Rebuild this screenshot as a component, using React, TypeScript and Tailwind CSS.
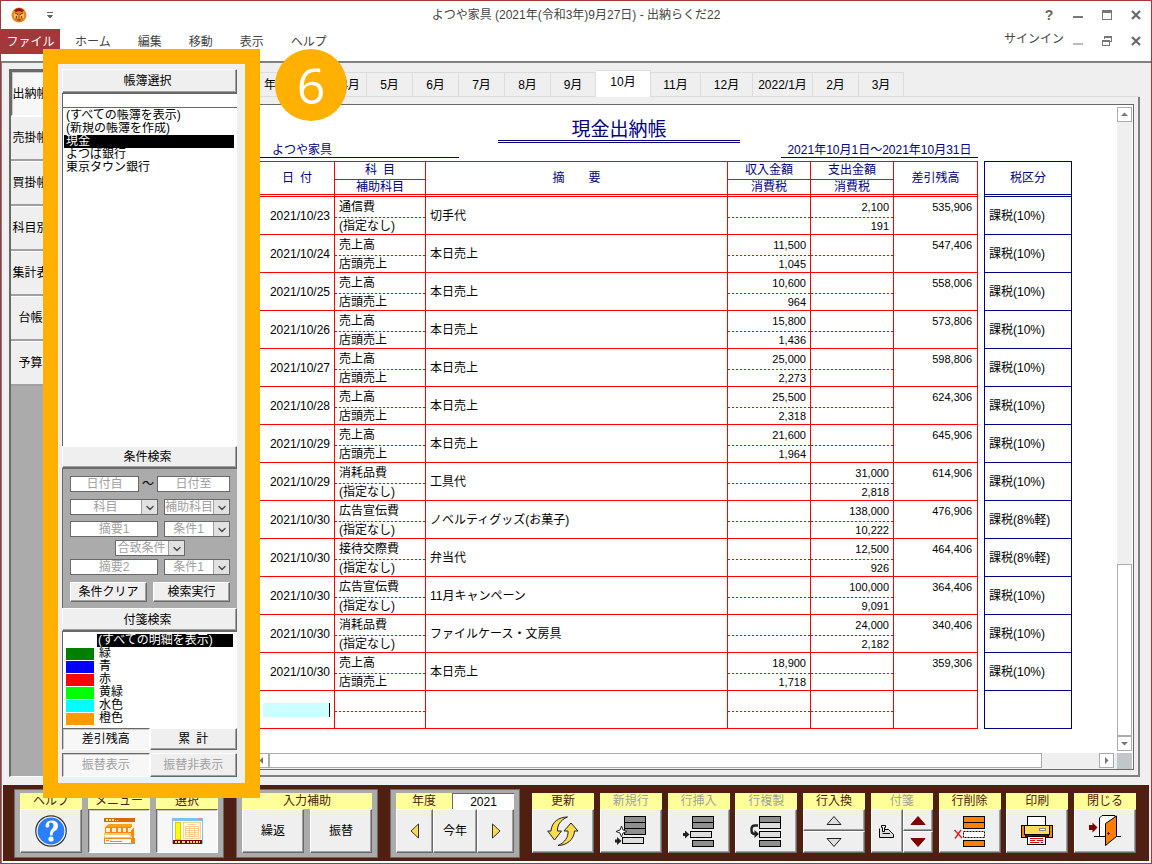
import React from 'react';
import { ChevronDown } from 'lucide-react';

const bevel =
  'bg-[#efefef] border border-t-white border-l-white border-r-[#696969] border-b-[#696969] shadow-[inset_-1px_-1px_0_#a0a0a0]';
const pressed =
  'bg-[#f7f7f7] border border-t-[#696969] border-l-[#696969] border-r-white border-b-white shadow-[inset_1px_1px_0_#c8c8c8]';

const ledgers = ['(すべての帳簿を表示)', '(新規の帳簿を作成)', '現金', 'よつば銀行', '東京タウン銀行'];

const sideTabs = ['出納帳', '売掛帳', '買掛帳', '科目別', '集計表', '台帳', '予算'];

const months = [
  { label: '5月', width: 'w-[46px]' },
  { label: '6月', width: 'w-[46px]' },
  { label: '7月', width: 'w-[46px]' },
  { label: '8月', width: 'w-[46px]' },
  { label: '9月', width: 'w-[45px]' },
  { label: '10月', width: 'w-[55px]' },
  { label: '11月', width: 'w-[50px]' },
  { label: '12月', width: 'w-[52px]' },
  { label: '2022/1月', width: 'w-[60px]' },
  { label: '2月', width: 'w-[46px]' },
  { label: '3月', width: 'w-[45px]' },
];

const flags = [
  { label: '緑', color: 'bg-[#008000]' },
  { label: '青', color: 'bg-[#0000ff]' },
  { label: '赤', color: 'bg-[#ff0000]' },
  { label: '黄緑', color: 'bg-[#00ff00]' },
  { label: '水色', color: 'bg-[#00ffff]' },
  { label: '橙色', color: 'bg-[#ff9900]' },
];

type Entry = {
  date: string;
  account: string;
  sub: string;
  note: string;
  income?: [string, string];
  expense?: [string, string];
  balance: string;
  tax: string;
};

const entries: Entry[] = [
  { date: '2021/10/23', account: '通信費', sub: '(指定なし)', note: '切手代', expense: ['2,100', '191'], balance: '535,906', tax: '課税(10%)' },
  { date: '2021/10/24', account: '売上高', sub: '店頭売上', note: '本日売上', income: ['11,500', '1,045'], balance: '547,406', tax: '課税(10%)' },
  { date: '2021/10/25', account: '売上高', sub: '店頭売上', note: '本日売上', income: ['10,600', '964'], balance: '558,006', tax: '課税(10%)' },
  { date: '2021/10/26', account: '売上高', sub: '店頭売上', note: '本日売上', income: ['15,800', '1,436'], balance: '573,806', tax: '課税(10%)' },
  { date: '2021/10/27', account: '売上高', sub: '店頭売上', note: '本日売上', income: ['25,000', '2,273'], balance: '598,806', tax: '課税(10%)' },
  { date: '2021/10/28', account: '売上高', sub: '店頭売上', note: '本日売上', income: ['25,500', '2,318'], balance: '624,306', tax: '課税(10%)' },
  { date: '2021/10/29', account: '売上高', sub: '店頭売上', note: '本日売上', income: ['21,600', '1,964'], balance: '645,906', tax: '課税(10%)' },
  { date: '2021/10/29', account: '消耗品費', sub: '(指定なし)', note: '工具代', expense: ['31,000', '2,818'], balance: '614,906', tax: '課税(10%)' },
  { date: '2021/10/30', account: '広告宣伝費', sub: '(指定なし)', note: 'ノベルティグッズ(お菓子)', expense: ['138,000', '10,222'], balance: '476,906', tax: '課税(8%軽)' },
  { date: '2021/10/30', account: '接待交際費', sub: '(指定なし)', note: '弁当代', expense: ['12,500', '926'], balance: '464,406', tax: '課税(8%軽)' },
  { date: '2021/10/30', account: '広告宣伝費', sub: '(指定なし)', note: '11月キャンペーン', expense: ['100,000', '9,091'], balance: '364,406', tax: '課税(10%)' },
  { date: '2021/10/30', account: '消耗品費', sub: '(指定なし)', note: 'ファイルケース・文房具', expense: ['24,000', '2,182'], balance: '340,406', tax: '課税(10%)' },
  { date: '2021/10/30', account: '売上高', sub: '店頭売上', note: '本日売上', income: ['18,900', '1,718'], balance: '359,306', tax: '課税(10%)' },
];

const AppLogo: React.FC = () => (
  <svg width="16" height="16" viewBox="0 0 16 16" aria-hidden="true">
    <circle cx="8" cy="8" r="7.5" fill="#ee8420" />
    <path d="M3 3.500 Q8 -1.500 13 3.500 L11 5 L8 4 L5 5Z" fill="#8c1a12" />
    <path d="M3 6 L6 6 L7 9 L6 13 L3 11Z M13 6 L10 6 L9 9 L10 13 L13 11Z" fill="#f9c060" />
    <path d="M4 6 L7 7.500 M12 6 L9 7.500 M5.500 9 L5 12.500 M10.500 9 L11 12.500 M6 13 H10" stroke="#6a3008" fill="none" />
    <path d="M7 6 H9 V12 H7Z" fill="#d8741a" />
  </svg>
);

const CloseGlyph: React.FC = () => (
  <svg width="10" height="10" viewBox="0 0 10 10" aria-hidden="true">
    <path d="M1 1 L9 9 M9 1 L1 9" stroke="#6a6a6a" strokeWidth="2.2" />
  </svg>
);

const TitleBar: React.FC = () => (
  <header className="grid h-7 grid-cols-[1fr_auto_1fr] items-center pl-2.5 pr-[10px] text-[#444]">
    <div className="flex items-center gap-5">
      <AppLogo />
      <svg width="6" height="7" viewBox="0 0 6 7" aria-hidden="true">
        <path d="M0 0.5 H6 M0.500 3.500 H5.500 L3 6Z" stroke="#666" fill="#666" />
      </svg>
    </div>
    <h1 className="text-xs">よつや家具 (2021年(令和3年)9月27日) - 出納らくだ22</h1>
    <div className="flex items-center justify-end gap-[19px]">
      <button aria-label="?" className="w-2.5 text-sm font-bold text-[#666]">?</button>
      <button aria-label="最小化" className="flex h-2.5 w-2.5 items-end pb-0.5"><span className="h-0.5 w-full bg-[#777]" /></button>
      <button aria-label="最大化" className="h-2.5 w-2.5 border border-t-[3px] border-[#777]" />
      <button aria-label="閉じる" className="w-2.5"><CloseGlyph /></button>
    </div>
  </header>
);

const Ribbon: React.FC = () => (
  <nav className="flex h-8 items-start justify-between pr-[10px] text-xs text-[#444]">
    <div className="flex items-center gap-[27px]">
      <button className="-mr-3 h-[25px] w-[59px] bg-[#a4373a] text-white">ファイル</button>
      <button>ホーム</button>
      <button>編集</button>
      <button>移動</button>
      <button>表示</button>
      <button>ヘルプ</button>
    </div>
    <div className="flex h-6 items-center gap-[19px]">
      <a href="#signin" className="-mr-2.5 pb-1">サインイン</a>
      <button aria-label="最小化" className="flex h-2.5 w-2.5 items-end pb-px"><span className="h-0.5 w-full bg-[#bbb]" /></button>
      <button aria-label="元に戻す" className="w-2.5">
        <svg width="10" height="10" viewBox="0 0 10 10" shapeRendering="crispEdges" fill="none" stroke="#777">
          <path d="M2.5 3 V0.5 H9.5 V5.5 H7.5 M2 1.5 H10" />
          <path d="M0.5 4.5 H7.5 V9.5 H0.5Z M0 5.5 H8" />
        </svg>
      </button>
      <button aria-label="閉じる" className="w-2.5"><CloseGlyph /></button>
    </div>
  </nav>
);

const SideTabs: React.FC = () => (
  <aside className="w-14 pt-[6px] pb-2 pl-[7px]">
    <div className="h-full overflow-hidden border-t-2 border-l-2 border-b border-t-[#696969] border-l-[#696969] border-b-white bg-[#ababab]">
      {sideTabs.map((tab, i) => (
        <button
          key={tab}
          className={`flex h-[45px] w-full items-center justify-center overflow-hidden whitespace-nowrap pr-2 ${i === 0 ? pressed : 'border-t border-b-2 border-t-white border-b-[#a0a0a0] bg-[#efefef]'}`}
        >
          {tab}
        </button>
      ))}
    </div>
  </aside>
);

const DisabledInput: React.FC<{ label: string; width: string }> = ({ label, width }) => (
  <input
    disabled
    aria-label={label}
    defaultValue={label}
    className={`h-4 border border-[#696969] bg-white text-center text-[#a0a0a0] ${width}`}
  />
);

const DisabledSelect: React.FC<{ label: string; width: string }> = ({ label, width }) => (
  <div className={`relative h-4 ${width}`}>
    <select
      disabled
      aria-label={label}
      className="block h-4 w-full appearance-none border border-[#696969] bg-white pr-[17px] text-center leading-3.5 text-[#a0a0a0] opacity-100"
    >
      <option>{label}</option>
    </select>
    <span className="pointer-events-none absolute inset-y-px right-px flex w-4 items-end justify-center border-l border-[#a0a0a0] bg-[#e1e1e1]">
      <ChevronDown size={12} strokeWidth={3} className="text-[#505050]" />
    </span>
  </div>
);

const Sidebar: React.FC = () => (
  <aside className="relative flex w-[187px] flex-col pt-[6px] pr-2 pb-2 pl-1">
    <button className={`h-6 pr-1 ${bevel}`}>帳簿選択</button>
    <input aria-label="帳簿" className="h-3.5 border-t border-l border-t-[#696969] border-l-[#696969] bg-white px-1" />
    <ul className="flex-1 border-t border-l border-t-[#696969] border-l-[#696969] bg-white pt-px pr-[3px] pl-px">
      {ledgers.map((name) => (
        <li key={name}>
          <button className={`block h-[13px] w-full overflow-hidden pl-0.5 text-left leading-[13px] ${name === '現金' ? 'bg-black text-white' : ''}`}>
            {name}
          </button>
        </li>
      ))}
    </ul>
    <button className={`h-[22px] pr-1 ${bevel}`}>条件検索</button>
    <div className="flex h-[140px] flex-col border-t border-l border-t-[#696969] border-l-[#696969] bg-[#ababab] pt-[7px] pr-[7px] pl-[7px]">
      <div className="flex items-center justify-between">
        <DisabledInput label="日付自" width="w-[69px]" />
        <span className="leading-4">～</span>
        <DisabledInput label="日付至" width="w-[73px]" />
      </div>
      <div className="mt-[7px] flex justify-between">
        <DisabledSelect label="科目" width="w-[88px]" />
        <DisabledSelect label="補助科目" width="w-[66px]" />
      </div>
      <div className="mt-[6px] flex justify-between">
        <DisabledInput label="摘要1" width="w-[88px]" />
        <DisabledSelect label="条件1" width="w-[66px]" />
      </div>
      <div className="mt-[3px] flex justify-center">
        <DisabledSelect label="合致条件" width="w-[70px]" />
      </div>
      <div className="mt-[3px] flex justify-between">
        <DisabledInput label="摘要2" width="w-[88px]" />
        <DisabledSelect label="条件1" width="w-[66px]" />
      </div>
      <div className="mt-[7px] flex gap-[6px]">
        <button className={`h-5 flex-1 leading-4 ${bevel}`}>条件クリア</button>
        <button className={`h-5 flex-1 leading-4 ${bevel}`}>検索実行</button>
      </div>
    </div>
    <button className={`h-[23px] pr-1 ${bevel}`}>付箋検索</button>
    <ul className="h-[97px] border-t border-l border-t-[#696969] border-l-[#696969] bg-white pt-0.5 pr-1 pl-[3px]">
      <li className="flex pl-[31px]">
        <button className="h-[13px] flex-1 bg-black pl-px text-left leading-[13px] text-white">(すべての明細を表示)</button>
      </li>
      {flags.map((flag) => (
        <li key={flag.label}>
          <button className="flex h-[13px] items-center gap-[5px] leading-[13px]">
            <span className={`h-3 w-7 ${flag.color}`} />
            {flag.label}
          </button>
        </li>
      ))}
    </ul>
    <div className="mb-[3px] flex h-[22px]">
      <button className={`flex-1 leading-5 ${pressed}`}>差引残高</button>
      <button className={`flex-1 leading-5 ${bevel}`}>累&ensp;計</button>
    </div>
    <div className="flex h-6 text-[#a0a0a0]">
      <button disabled className={`flex-1 leading-5 ${pressed}`}>振替表示</button>
      <button disabled className={`flex-1 leading-5 ${bevel}`}>振替非表示</button>
    </div>
    {/* step callout laid over the sidebar */}
    <div className="pointer-events-none absolute -top-3.5 -right-[15px] -bottom-[13px] -left-[15px] z-10 border-[15px] border-[#ffb000]" />
    <div className="pointer-events-none absolute -top-3.5 left-[217px] z-20 flex h-[72px] w-[72px] items-center justify-center rounded-full bg-[#ffb000] font-['Open_Sans',sans-serif] text-[50px] text-white">
      6
    </div>
  </aside>
);

const MonthTabs: React.FC = () => (
  <div className="flex h-[26px] items-end border-b border-[#dcdcdc] pl-[15px]">
    <button className="h-6 w-[61px] border-t border-r border-[#dcdcdc] pl-1 text-left">年</button>
    <button className="h-6 w-[46px] border-t border-r border-[#dcdcdc] pl-3.5">4月</button>
    {months.map((m) => (
      <button
        key={m.label}
        className={`whitespace-nowrap border-t border-r border-[#dcdcdc] ${m.width} ${m.label === '10月' ? '-mb-px h-[27px] bg-white pb-1' : 'h-6'}`}
      >
        {m.label}
      </button>
    ))}
  </div>
);

const th = 'border-r border-b-3 border-b-[#f00] border-r-[#f00] border-t border-t-[#f00] [border-bottom-style:double] p-0 font-normal';
const td = 'border-r border-b border-[#f00] p-0';

const SplitHead: React.FC<{ top: string; bottom: string }> = ({ top, bottom }) => (
  <>
    <div className="h-[18px] border-b border-b-[#f00] leading-4">{top}</div>
    <div className="h-3.5 leading-3.5">{bottom}</div>
  </>
);

const Split: React.FC<{ top?: string; bottom?: string }> = ({ top, bottom }) => (
  <>
    <div className="h-5 px-1 leading-5">{top}</div>
    <div className="h-px bg-[repeating-linear-gradient(to_right,#ff0000_0_2px,#ffffff_2px_4px)]" />
    <div className="h-4 px-1 leading-4">{bottom}</div>
  </>
);

const LedgerTable: React.FC = () => (
  <table className="w-full table-fixed border-separate border-spacing-0">
    <colgroup>
      <col className="w-[75px]" />
      <col className="w-[91px]" />
      <col />
      <col className="w-[83px]" />
      <col className="w-[83px]" />
      <col className="w-[84px]" />
      <col className="w-[6px]" />
      <col className="w-[88px]" />
    </colgroup>
    <thead className="text-[#000080]">
      <tr className="h-9">
        <th className={th}>日&ensp;付</th>
        <th className={th}><SplitHead top="科&ensp;目" bottom="補助科目" /></th>
        <th className={th}>摘　　要</th>
        <th className={th}><SplitHead top="収入金額" bottom="消費税" /></th>
        <th className={th}><SplitHead top="支出金額" bottom="消費税" /></th>
        <th className={th}>差引残高</th>
        <td />
        <th className="border border-b-3 border-[#000080] p-0 font-normal [border-bottom-style:double]">税区分</th>
      </tr>
    </thead>
    <tbody>
      {entries.map((e, i) => (
        <tr key={i} className="h-[38px]">
          <td className={`${td} pr-1 text-right`}>{e.date}</td>
          <td className={td}><Split top={e.account} bottom={e.sub} /></td>
          <td className={`${td} pl-1`}>{e.note}</td>
          <td className={`${td} text-right text-[11px]`}><Split top={e.income?.[0]} bottom={e.income?.[1]} /></td>
          <td className={`${td} text-right text-[11px]`}><Split top={e.expense?.[0]} bottom={e.expense?.[1]} /></td>
          <td className={`${td} pr-[5px] text-right align-top text-[11px] leading-5`}>{e.balance}</td>
          <td />
          <td className="border-x border-b border-[#000080] py-0 pr-0 pl-1">{e.tax}</td>
        </tr>
      ))}
      <tr className="h-[38px]">
        <td className={`${td} pr-1 pl-[3px]`}>
          <input aria-label="日付" className="block h-3.5 w-full border-r border-black bg-[#ccffff]" />
        </td>
        <td className={td}><Split /></td>
        <td className={td} />
        <td className={td}><Split /></td>
        <td className={td}><Split /></td>
        <td className={td} />
        <td />
        <td className="border-x border-b border-[#000080]" />
      </tr>
    </tbody>
  </table>
);

const ScrollButton: React.FC<{ label: string; d: string }> = ({ label, d }) => (
  <button aria-label={label} className="flex h-[15px] w-[15px] shrink-0 items-center justify-center border border-[#ababab] bg-white">
    <svg width="7" height="7" viewBox="0 0 7 7" fill="#777"><path d={d} /></svg>
  </button>
);

const Ledger: React.FC = () => (
  <main className="flex min-w-0 flex-1 flex-col pt-2 pr-[11px] pb-2">
    <MonthTabs />
    <div className="flex-1 border-r-2 border-b-2 border-[#808080] pt-[7px] pr-1 pb-[5px]">
      <div className="flex h-full flex-col border-t border-r border-b border-[#696969] bg-white pt-0.5 pr-px">
        <div className="flex flex-1">
          <div className="min-w-0 flex-1 pr-[45px] pl-[15px] pt-2.5">
            <div className="pr-[94px] text-[#000080]">
              <h2 className="mx-auto h-[26px] w-[242px] border-b-3 border-[#000080] text-center text-[19px] leading-[26px] [border-bottom-style:double]">
                現金出納帳
              </h2>
              <div className="mb-[3px] flex justify-between">
                <p className="h-[15px] w-[199px] border-b border-[#000080] pl-3 leading-3.5">よつや家具</p>
                <p className="h-[15px] w-[197px] border-b border-[#000080] text-center leading-3.5">2021年10月1日～2021年10月31日</p>
              </div>
            </div>
            <LedgerTable />
          </div>
          <div className="flex w-[15px] flex-col bg-[#efefef]">
            <ScrollButton label="上へ" d="M0 5 L3.5 1.5 L7 5Z" />
            <div className="flex-1" />
            <div className="h-[172px] border border-[#ababab] bg-white" />
            <ScrollButton label="下へ" d="M0 2 L3.5 5.5 L7 2Z" />
          </div>
        </div>
        <div className="mt-0.5 flex h-4 items-start bg-[#efefef] pl-[9px]">
          <ScrollButton label="左へ" d="M5 0 L1.5 3.5 L5 7Z" />
          <div className="h-[15px] flex-1 border border-[#ababab] bg-white" />
          <div className="w-[57px]" />
          <ScrollButton label="右へ" d="M2 0 L5.5 3.5 L2 7Z" />
          <div className="ml-[3px] h-4 w-[15px] bg-[#c2c5ca]" />
        </div>
      </div>
    </div>
  </main>
);

const label = 'flex h-4 items-center justify-center bg-[#ffff99]';
const face = 'flex h-11 items-center justify-center';

const Tool: React.FC<{ name: string; disabled?: boolean; on?: boolean; children: React.ReactNode }> = ({ name, disabled, on, children }) => (
  <button disabled={disabled} className="flex w-[62px] flex-col">
    <span className={`${label} w-full ${disabled ? 'text-[#a0a0a0]' : 'text-[#4f2012]'}`}>{name}</span>
    <span className={`${face} w-full ${on ? pressed : bevel}`}>{children}</span>
  </button>
);

const HelpIcon = () => (
  <svg width="32" height="32" viewBox="0 0 32 32">
    <circle cx="16" cy="16" r="15.2" fill="#fff" stroke="#333" strokeWidth="1.2" />
    <circle cx="16" cy="16" r="13.4" fill="#2b7fff" />
    <path d="M10.5 11.5 Q10.5 5.5 16.5 5.5 Q23 5.5 23 11 Q23 14.5 19 16.5 Q17.5 17.5 17.5 20.5 H15 Q14.500 16 17 14 Q19 12 18.500 9.500 Q18 7.500 15.500 7.500 Q14 7.500 14 9 Q15 11 13.500 12.300 Q11.500 13.300 10.500 11.500Z" fill="#fff" />
    <circle cx="16" cy="24" r="2.6" fill="#fff" />
  </svg>
);

const MenuIcon = () => (
  <svg width="31" height="27" viewBox="0 0 31 27" shapeRendering="crispEdges">
    <rect width="31" height="4" fill="#d96a00" />
    <path d="M2 1h2v2h-2z M5 1h2v2h-2z M8 1h2v2h-2z M11 2h1v1h-1z M13 2h1v1h-1z" fill="#ffe9a8" />
    <rect y="4" width="31" height="22" fill="#fff1d6" />
    <path d="M1 9 L4 6 H28 V9Z" fill="#ffa21a" />
    <rect x="1" y="9" width="26" height="6" fill="#f08a10" />
    <path d="M2 10h4v4h-4z M8 10h4v4h-4z M14 10h3v4h-3z M19 10h3v4h-3z M24 10h3v4h-3z" fill="#fff1d6" />
    <rect y="15" width="28" height="5" fill="#ffc67a" />
    <rect x="1" y="17" width="25" height="2" fill="#fff" />
    <rect y="20" width="31" height="6" fill="#f08a10" />
    <rect x="1" y="21" width="26" height="4" fill="#fff" />
    <path d="M2 22.500h3 M6 23.500h12" stroke="#f08a10" />
    <path d="M27 12 L30 9 V24 H28Z" fill="#f08a10" />
  </svg>
);

const SelectIcon = () => (
  <svg width="31" height="27" viewBox="0 0 31 27" shapeRendering="crispEdges">
    <rect width="31" height="26" fill="#7fbfff" />
    <rect x="26" width="4" height="2" fill="#ff7fa8" />
    <rect x="1" y="3" width="29" height="19" fill="#fff" />
    <rect x="3" y="4" width="5" height="17" fill="#ffff00" stroke="#e8c800" />
    <path d="M11.500 4.500 H28.500 V20.500 H11.500Z M13.500 8.500 H26.500 V18.500 H13.500Z M13 10.500 H27 M13 12.500 H27 M13 14.500 H27 M13 16.500 H27 M17.500 8 V19 M22.500 8 V19 M16 6.500 H24" stroke="#ffd08a" fill="none" />
    <rect x="1" y="22" width="29" height="4" fill="#7a0010" />
    <path d="M3 23h2v2h-2z M6 23h2v2h-2z M10 23h3v2h-3z M15 23h2v2h-2z M18 23h2v2h-2z M21 23h2v2h-2z M24 23h2v2h-2z M27 23h1v2h-1z" fill="#ffe14d" />
  </svg>
);

const YearArrow: React.FC<{ d: string }> = ({ d }) => (
  <svg width="10" height="16" viewBox="0 0 10 16"><path d={d} fill="#ffdc4a" stroke="#333" /></svg>
);

const RefreshIcon = () => (
  <svg width="32" height="31" viewBox="0 0 32 31" fill="#ffdc4a" stroke="#222" strokeLinejoin="round">
    <path d="M20.500 1 C12 1 4.500 6 4 15 H0.700 L7.500 24 L14.500 15 H10.500 C10 10 13 4 20.500 1Z" />
    <path d="M11 29.500 C19 29.500 27 24 27.500 15 H31 L24 7 L17 15 H21 C21.500 21 18 26.500 11 29.500Z" />
  </svg>
);

const RowBox: React.FC<{ x?: number; y: number; fill: string; dashed?: boolean }> = ({ x = 9.5, y, fill, dashed }) => (
  <rect x={x} y={y} width="21" height="6" fill={fill} stroke="#000" strokeDasharray={dashed ? '2 1' : undefined} />
);

const InsertArrow: React.FC<{ y: number }> = ({ y }) => (
  <path d={`M0 ${y - 1.5} H2 V${y - 4} L6.500 ${y} L2 ${y + 4} V${y + 1.5} H0Z`} fill="#222" />
);

const NewRowIcon = () => (
  <svg width="32" height="31" viewBox="0 0 32 31">
    <RowBox y={0.5} fill="#8f8f8f" />
    <RowBox y={6.5} fill="#8f8f8f" />
    <RowBox y={12.5} fill="#8f8f8f" />
    <RowBox x={7.5} y={21.5} fill="#dedede" />
    <path d="M6.500 10 L8 14 L12 15.500 L8 17 L6.500 21 L5 17 L1 15.500 L5 14Z" fill="#fff" stroke="#222" />
    <InsertArrow y={25} />
  </svg>
);

const InsertRowIcon = () => (
  <svg width="32" height="31" viewBox="0 0 32 31">
    <RowBox y={0.5} fill="#8f8f8f" />
    <RowBox y={6.5} fill="#8f8f8f" />
    <RowBox x={7.5} y={15.5} fill="#dedede" />
    <RowBox y={24.5} fill="#8f8f8f" />
    <InsertArrow y={18.5} />
  </svg>
);

const CopyRowIcon = () => (
  <svg width="32" height="31" viewBox="0 0 32 31">
    <RowBox y={0.5} fill="#8f8f8f" />
    <RowBox y={6.5} fill="#dedede" />
    <RowBox y={15.5} fill="#dedede" />
    <RowBox y={24.5} fill="#8f8f8f" />
    <path d="M8 9.500 H5 Q1.500 9.500 1.500 13 V14.500 Q1.500 18 5 18" fill="none" stroke="#222" strokeWidth="2.4" />
    <path d="M4.500 14 L9 18 L4.500 22Z" fill="#222" />
  </svg>
);

const DeleteRowIcon = () => (
  <svg width="32" height="31" viewBox="0 0 32 31">
    <RowBox y={0.5} fill="#ff8000" />
    <RowBox y={6.5} fill="#ff8000" />
    <RowBox y={15.5} fill="#fff" dashed />
    <RowBox y={24.5} fill="#ff8000" />
    <path d="M0.500 14 L8 22 M7 14 L1 22.500" stroke="#e02020" strokeWidth="1.4" />
  </svg>
);

const PrinterIcon = () => (
  <svg width="32" height="30" viewBox="0 0 32 30" stroke="#000">
    <rect x="0.500" y="9.500" width="4" height="12" fill="#ff8000" />
    <rect x="27.500" y="9.500" width="4" height="12" fill="#ff8000" />
    <rect x="6.500" y="0.500" width="18" height="10" fill="#fff" />
    <rect x="3.500" y="9.500" width="25" height="9" fill="#ffdc5a" />
    <rect x="18.500" y="12.500" width="6" height="2" fill="#fff" stroke="#888" />
    <path d="M5 18.500 H27 V21.500 H5Z" fill="#7f0000" />
    <rect x="6.500" y="20.500" width="18" height="8" fill="#fff" />
    <path d="M9 22.500 H22 M9 24.500 H14 M16 24.500 H22 M9 26.500 H18 M20 26.500 H22" stroke="#f00000" />
  </svg>
);

const DoorIcon = () => (
  <svg width="32" height="32" viewBox="0 0 32 32">
    <path d="M5 21.500 H32" stroke="#000" />
    <path d="M10.500 21.500 V3 L13 0.500 H26 L27 21.500 H17Z" fill="#fff" stroke="#000" />
    <path d="M16.500 8.500 L27.500 1 V21.500 L16.500 30.500Z" fill="#ff8000" stroke="#000" />
    <path d="M18 18.500 H21 M19.500 17 V20" stroke="#7f0000" />
    <path d="M0 10 H3.500 V7.500 L8.500 12.500 L3.500 17.500 V15 H0Z" fill="#7f0000" />
  </svg>
);

const TagIcon = () => (
  <svg width="15" height="13" viewBox="0 0 15 13" fill="#dedede" stroke="#000">
    <path d="M0.500 3.500 V12.500 H14.500 V9.500 L9.500 4.500 H6" />
    <path d="M2.500 0.500 H6.500 V2.500 H5.500 V6.500 H3.500 V2.500 H2.500Z M3.500 8.500 H11 " fill="#fff" />
  </svg>
);

const Triangle: React.FC<{ up?: boolean; fill: string; stroke: string }> = ({ up, fill, stroke }) => (
  <svg width="16" height="9" viewBox="0 0 16 9"><path d={up ? 'M8 0.500 L15 8.500 H1Z' : 'M8 8.500 L15 0.500 H1Z'} fill={fill} stroke={stroke} /></svg>
);

const group = 'flex border border-[#696969] bg-[#ababab] px-[5px] pt-[3px] pb-1';

const Toolbar: React.FC = () => (
  <footer className="mr-0.5 ml-px flex h-[76px] items-start gap-3 bg-[#4f2012] pt-1 pr-[13px] pl-[11px]">
    <div className={`${group} gap-[6px]`}>
      <Tool name="ヘルプ"><HelpIcon /></Tool>
      <Tool name="メニュー" on><MenuIcon /></Tool>
      <Tool name="選択" on><SelectIcon /></Tool>
    </div>
    <div className={`${group} flex-col`}>
      <div className={`${label} text-[#4f2012]`}>入力補助</div>
      <div className="flex gap-[6px]">
        <button className={`${face} w-[62px] ${bevel}`}>繰返</button>
        <button className={`${face} w-[62px] ${bevel}`}>振替</button>
      </div>
    </div>
    <div className={`${group} flex-col`}>
      <div className="flex">
        <label htmlFor="year" className={`${label} w-14 text-[#4f2012]`}>年度</label>
        <input id="year" defaultValue="2021" className="h-4 w-[62px] border-t border-l border-[#696969] bg-white text-center" />
      </div>
      <div className="flex">
        <button aria-label="前年" className={`${face} w-[37px] ${bevel}`}><YearArrow d="M8.500 1 V15 L1 8Z" /></button>
        <button className={`${face} w-11 ${bevel}`}>今年</button>
        <button aria-label="翌年" className={`${face} w-[37px] ${bevel}`}><YearArrow d="M1.500 1 V15 L9 8Z" /></button>
      </div>
    </div>
    <div className="flex flex-1 justify-between pt-1">
      <Tool name="更新"><RefreshIcon /></Tool>
      <Tool name="新規行" disabled><NewRowIcon /></Tool>
      <Tool name="行挿入" disabled><InsertRowIcon /></Tool>
      <Tool name="行複製" disabled><CopyRowIcon /></Tool>
      <div className="w-[62px]">
        <div className={`${label} text-[#4f2012]`}>行入換</div>
        <button aria-label="上へ" className={`flex h-[22px] w-full items-center justify-center ${bevel}`}><Triangle up fill="#dedede" stroke="#222" /></button>
        <button aria-label="下へ" className={`flex h-[22px] w-full items-center justify-center ${bevel}`}><Triangle fill="#dedede" stroke="#222" /></button>
      </div>
      <div className="w-[62px]">
        <div className={`${label} text-[#a0a0a0]`}>付箋</div>
        <div className="flex">
          <button aria-label="付箋" className={`${face} flex-1 ${bevel}`}><TagIcon /></button>
          <div className="flex-1">
            <button aria-label="前の付箋" className={`flex h-[22px] w-full items-center justify-center ${bevel}`}><Triangle up fill="#7f0000" stroke="#7f0000" /></button>
            <button aria-label="次の付箋" className={`flex h-[22px] w-full items-center justify-center ${bevel}`}><Triangle fill="#7f0000" stroke="#7f0000" /></button>
          </div>
        </div>
      </div>
      <Tool name="行削除"><DeleteRowIcon /></Tool>
      <Tool name="印刷"><PrinterIcon /></Tool>
      <Tool name="閉じる"><DoorIcon /></Tool>
    </div>
  </footer>
);

const App: React.FC = () => (
  <div className="flex min-h-screen flex-col overflow-hidden border border-[#a4373a] bg-white font-['Liberation_Sans','Noto_Sans_CJK_JP',sans-serif] text-xs text-black">
    <TitleBar />
    <Ribbon />
    <div className="flex flex-1 flex-col border-t-2 border-l border-[#808080] bg-[#efefef]">
      <div className="flex flex-1">
        <SideTabs />
        <Sidebar />
        <Ledger />
      </div>
      <Toolbar />
      <div className="h-0.5 bg-white" />
    </div>
  </div>
);

export default App;
